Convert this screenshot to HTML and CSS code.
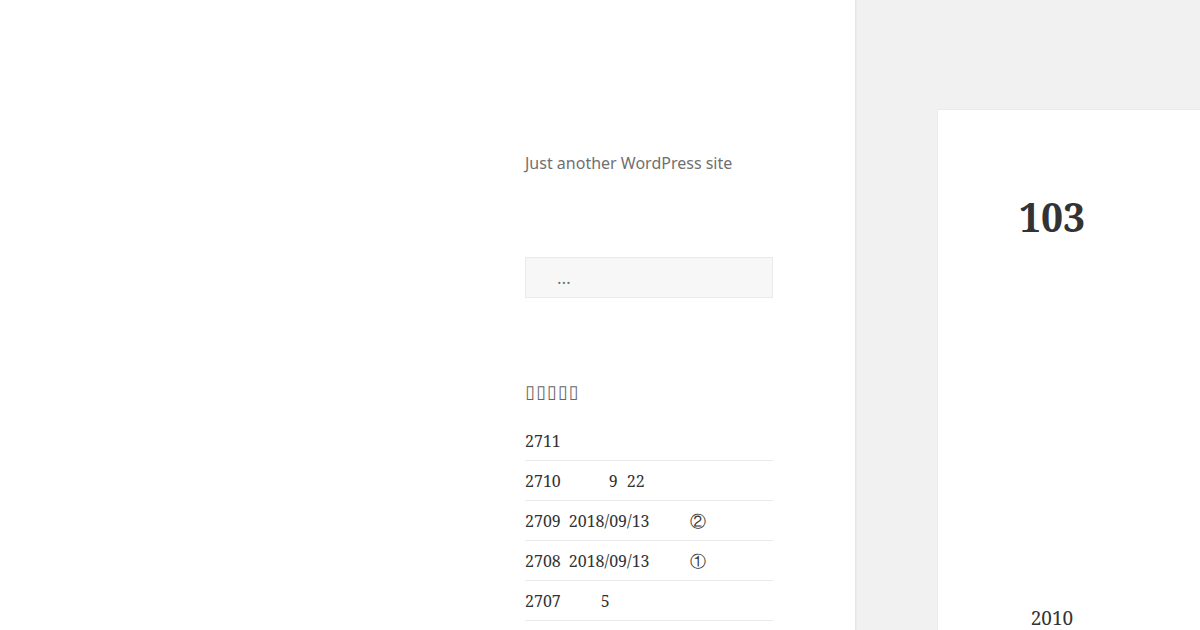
FILE: index.html
```html
<!DOCTYPE html>
<html lang="ja">
<head>
    <meta charset="UTF-8">
    <meta name="viewport" content="width=device-width, initial-scale=1.0">
    <title>Just another WordPress site</title>
    <link rel="stylesheet" href="styles.css">
</head>
<body>

<div class="page">
    <div class="sidebar">
        <div class="sidebar-inner">
            <p class="site-description">Just another WordPress site</p>

            <form class="search-form">
                <input type="search" class="search-field" placeholder="&emsp;&ensp;…">
            </form>

            <div class="widget">
                <h2 class="widget-title">▯▯▯▯▯</h2>
                <ul class="post-list">
                    <li><a href="#">2711</a></li>
                    <li><a href="#">2710<span class="gap g48"></span>9<span class="gap g9"></span>22</a></li>
                    <li><a href="#">2709<span class="gap g8"></span>2018/09/13<span class="gap g40"></span>②</a></li>
                    <li><a href="#">2708<span class="gap g8"></span>2018/09/13<span class="gap g40"></span>①</a></li>
                    <li><a href="#">2707<span class="gap g40"></span>5</a></li>
                </ul>
            </div>
        </div>
    </div>

    <div class="main">
        <article class="post">
            <header class="entry-header">
                <h1 class="entry-title">103</h1>
            </header>
            <div class="entry-content">
                <p>2010</p>
            </div>
        </article>
    </div>
</div>

</body>
</html>
```

FILE: styles.css
```css
html {
    overflow: hidden;
}

body {
    margin: 0;
    padding: 0;
    background-color: #f1f1f1;
    color: #333;
    font-family: "Noto Serif", "DejaVu Serif", serif;
}

.page {
    display: flex;
    min-height: 630px;
}

.sidebar {
    width: 855px;
    flex-shrink: 0;
    background-color: white;
    box-shadow: 0 0 1px rgba(0, 0, 0, 0.15);
    border-right: 1px solid #e6e6e6;
}

.sidebar-inner {
    margin-left: 525px;
    width: 248px;
    padding-top: 151px;
}

.site-description {
    margin: 0;
    font-family: "Noto Sans", sans-serif;
    font-size: 16px;
    line-height: 24px;
    color: #707070;
}

.search-form {
    margin-top: 82px;
}

.search-field {
    box-sizing: border-box;
    width: 100%;
    height: 41px;
    margin: 0;
    padding: 0 7px;
    background-color: #f7f7f7;
    border: 1px solid #eaeaea;
    font-family: "Noto Serif", serif;
    font-size: 16px;
    color: #333;
}

.search-field::placeholder {
    color: #707070;
}

.widget {
    margin-top: 82px;
}

.widget-title {
    margin: 0;
    font-family: "DejaVu Sans", sans-serif;
    font-size: 18px;
    font-weight: normal;
    line-height: 24px;
    letter-spacing: 1px;
    color: #666;
}

.post-list {
    list-style: none;
    margin: 17px 0 0;
    padding: 0;
}

.post-list li {
    border-bottom: 1px solid #eaeaea;
    padding: 8px 0 7px;
    font-size: 16px;
    line-height: 24px;
}

.post-list a {
    color: #333;
    text-decoration: none;
}

.gap {
    display: inline-block;
}

.g8 { width: 8px; }
.g9 { width: 9px; }
.g40 { width: 40px; }
.g48 { width: 48px; }

.main {
    flex: 1;
    padding-top: 110px;
    padding-left: 82px;
    overflow: hidden;
}

.post {
    background-color: white;
    width: 400px;
    min-height: 520px;
    box-shadow: 0 0 1px rgba(0, 0, 0, 0.15);
}

.entry-header,
.entry-content {
    width: 228px;
    text-align: center;
}

.entry-header {
    padding-top: 80px;
}

.entry-title {
    margin: 0;
    font-size: 39px;
    font-weight: 700;
    line-height: 54px;
    color: #333;
}

.entry-content p {
    margin: 0;
    padding-top: 360px;
    font-size: 19px;
    line-height: 28px;
    color: #333;
}
```
